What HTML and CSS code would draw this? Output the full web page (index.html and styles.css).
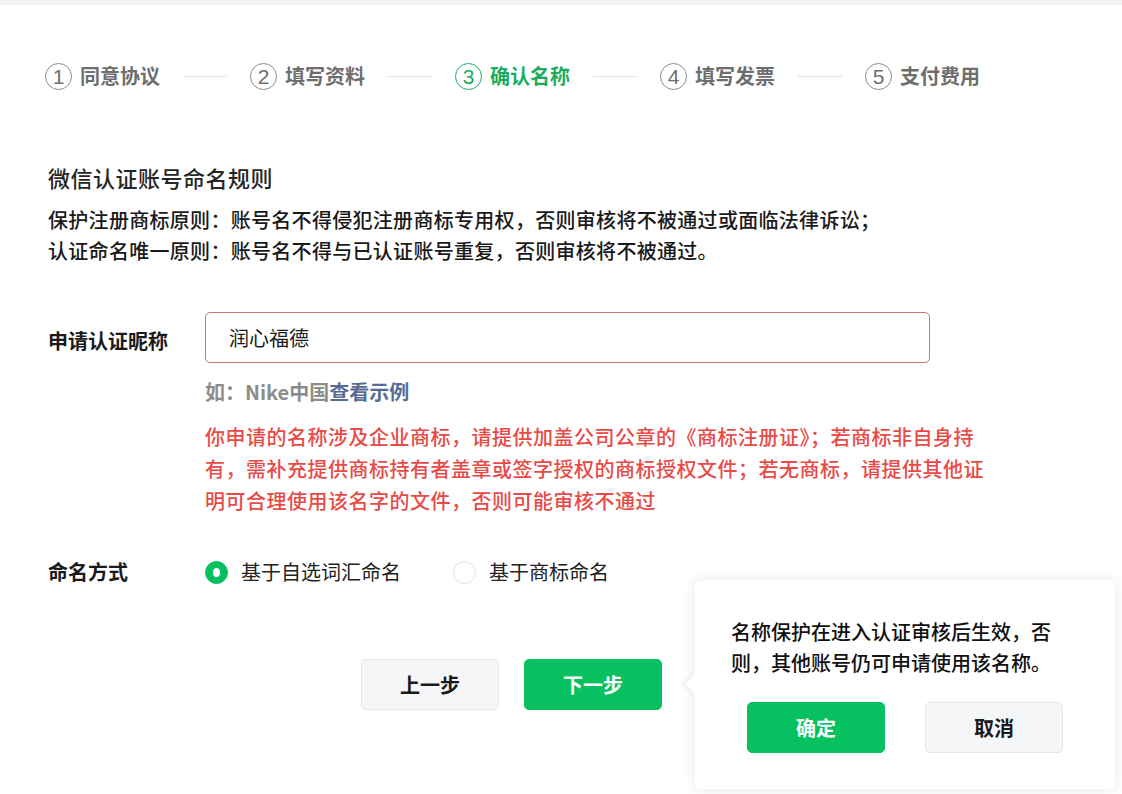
FILE: index.html
```html
<!DOCTYPE html>
<html>
<head>
    <title>确认名称</title>
    <meta charset="utf-8">
    <link rel="stylesheet" href="styles.css">
</head>
<body>
    <div class="topbar"></div>
    <div class="page">
        <div class="steps">
            <div class="step"><span class="num">1</span><span class="step-name">同意协议</span></div>
            <div class="step-line"></div>
            <div class="step"><span class="num">2</span><span class="step-name">填写资料</span></div>
            <div class="step-line"></div>
            <div class="step active"><span class="num">3</span><span class="step-name">确认名称</span></div>
            <div class="step-line"></div>
            <div class="step"><span class="num">4</span><span class="step-name">填写发票</span></div>
            <div class="step-line"></div>
            <div class="step"><span class="num">5</span><span class="step-name">支付费用</span></div>
        </div>

        <h2 class="rules-title">微信认证账号命名规则</h2>
        <p class="rule">保护注册商标原则：账号名不得侵犯注册商标专用权，否则审核将不被通过或面临法律诉讼；</p>
        <p class="rule">认证命名唯一原则：账号名不得与已认证账号重复，否则审核将不被通过。</p>

        <div class="form-row">
            <label class="form-label" for="nickname">申请认证昵称</label>
            <div class="form-field">
                <div class="name-input">润心福德</div>
                <p class="hint">如：Nike中国<a class="link" href="#">查看示例</a></p>
                <p class="warn">你申请的名称涉及企业商标，请提供加盖公司公章的《商标注册证》；若商标非自身持<br>有，需补充提供商标持有者盖章或签字授权的商标授权文件；若无商标，请提供其他证<br>明可合理使用该名字的文件，否则可能审核不通过</p>
            </div>
        </div>

        <div class="form-row radio-row">
            <span class="form-label">命名方式</span>
            <div class="radios">
                <label class="radio checked"><span class="dot"></span>基于自选词汇命名</label>
                <label class="radio"><span class="dot"></span>基于商标命名</label>
            </div>
        </div>

        <div class="actions">
            <button class="btn btn-default">上一步</button>
            <button class="btn btn-primary">下一步</button>
        </div>
    </div>

    <div class="popover">
        <p class="popover-text">名称保护在进入认证审核后生效，否则，其他账号仍可申请使用该名称。</p>
        <div class="popover-actions">
            <button class="btn btn-primary">确定</button>
            <button class="btn btn-default">取消</button>
        </div>
    </div>
</body>
</html>
```

FILE: styles.css
```css
body {
    margin: 0;
    font-family: "Noto Sans CJK SC", "Noto Sans", sans-serif;
    color: #1a1a1a;
    background-color: #ffffff;
    width: 1122px;
    height: 794px;
    overflow: hidden;
    position: relative;
}
p, h2 {
    margin: 0;
}
.topbar {
    height: 5px;
    background-color: #f2f4f3;
}
.page {
    padding: 0 48px;
}

/* steps */
.steps {
    display: flex;
    align-items: center;
    margin: 57px 0 0 -3px;
    height: 28px;
}
.step {
    display: flex;
    align-items: center;
    gap: 8px;
    color: #6e6e6e;
}
.num {
    box-sizing: border-box;
    width: 27px;
    height: 27px;
    border: 1.5px solid #8a8a8a;
    border-radius: 50%;
    display: flex;
    align-items: center;
    justify-content: center;
    font-family: "Liberation Sans", Arial, sans-serif;
    font-size: 21px;
    line-height: 1;
    padding-top: 1px;
}
.step-name {
    font-size: 20px;
    font-weight: 700;
    line-height: 28px;
}
.step.active {
    color: #1aad5e;
}
.step.active .num {
    border-color: #1aad5e;
}
.step-line {
    width: 44px;
    height: 1px;
    background-color: #e2e2e2;
    margin: 0 23px;
}

/* rules */
.rules-title {
    margin-top: 72px;
    font-size: 22px;
    font-weight: 500;
    line-height: 30px;
    letter-spacing: 0.5px;
    color: #262626;
}
.rule {
    font-size: 20px;
    font-weight: 500;
    line-height: 31px;
    letter-spacing: 0.3px;
    color: #1a1a1a;
}
.rules-title + .rule {
    margin-top: 12px;
}

/* form */
.form-row {
    display: flex;
    margin-top: 46px;
}
.form-label {
    width: 157px;
    flex-shrink: 0;
    font-size: 20px;
    font-weight: 700;
    line-height: 30px;
    padding-top: 14px;
    color: #1a1a1a;
}
.name-input {
    box-sizing: border-box;
    width: 725px;
    height: 51px;
    border: 1px solid #d27474;
    border-radius: 5px;
    padding: 0 23px;
    display: flex;
    align-items: center;
    font-size: 20px;
    color: #1a1a1a;
}
.hint {
    margin-top: 14px;
    font-size: 20px;
    font-weight: 700;
    line-height: 30px;
    color: #8c8c8c;
}
.link {
    color: #576b95;
    text-decoration: none;
}
.warn {
    margin-top: 14px;
    font-size: 20px;
    font-weight: 500;
    line-height: 32px;
    letter-spacing: 0.5px;
    color: #e84b47;
}

.radio-row {
    margin-top: 40px;
}
.radio-row .form-label {
    padding-top: 0;
}
.radios {
    display: flex;
    gap: 52px;
}
.radio {
    display: flex;
    align-items: center;
    gap: 13px;
    font-size: 20px;
    line-height: 30px;
    color: #222;
}
.dot {
    box-sizing: border-box;
    width: 23px;
    height: 23px;
    border-radius: 50%;
    border: 1px solid #e3e3e3;
    position: relative;
}
.radio.checked .dot {
    background-color: #07c160;
    border-color: #07c160;
}
.radio.checked .dot::after {
    content: "";
    position: absolute;
    left: 7px;
    top: 6px;
    width: 7px;
    height: 9px;
    border-radius: 50%;
    background-color: #ffffff;
}

/* buttons */
.actions {
    display: flex;
    gap: 25px;
    margin: 72px 0 0 313px;
}
.btn {
    box-sizing: border-box;
    width: 138px;
    height: 51px;
    border-radius: 5px;
    font-family: inherit;
    font-size: 20px;
    font-weight: 700;
    cursor: pointer;
}
.btn-default {
    background-color: #f5f6f7;
    border: 1px solid #e4e6e8;
    color: #1a1a1a;
}
.btn-primary {
    background-color: #07c160;
    border: 1px solid #07c160;
    color: #ffffff;
}

/* popover */
.popover {
    position: absolute;
    left: 695px;
    top: 580px;
    width: 420px;
    box-sizing: border-box;
    padding: 36px 50px 36px 36px;
    background-color: #ffffff;
    border-radius: 6px;
    box-shadow: 0 0 14px rgba(0, 0, 0, 0.1);
}
.popover::before {
    content: "";
    position: absolute;
    left: -7px;
    top: 97px;
    width: 14px;
    height: 14px;
    background-color: #ffffff;
    transform: rotate(45deg);
    box-shadow: -3px 3px 5px rgba(0, 0, 0, 0.05);
}
.popover-text {
    font-size: 20px;
    font-weight: 500;
    line-height: 31px;
    color: #111;
}
.popover-actions {
    display: flex;
    justify-content: center;
    gap: 40px;
    margin: 24px -14px 0 0;
}
```
